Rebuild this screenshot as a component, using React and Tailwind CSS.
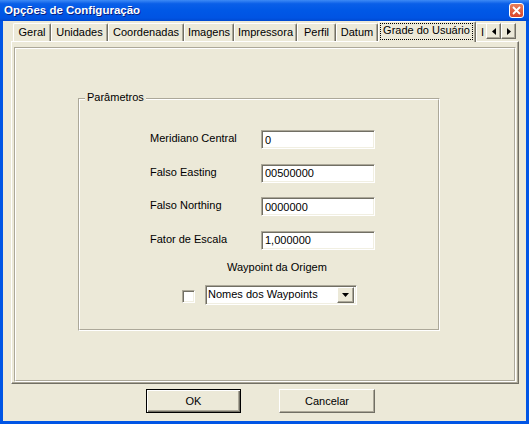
import React from "react";

const tabs = [
  ["Geral", "w-[38px]"],
  ["Unidades", "w-[57px]"],
  ["Coordenadas", "w-[76px]"],
  ["Imagens", "w-[50px]"],
  ["Impressora", "w-[63px]"],
  ["Perfil", "w-[39px]"],
  ["Datum", "w-[42px]"],
];

const fields = [
  ["Meridiano Central", "0"],
  ["Falso Easting", "00500000"],
  ["Falso Northing", "0000000"],
  ["Fator de Escala", "1,000000"],
];

const raised =
  "border border-t-white border-l-white border-r-[#716f64] border-b-[#716f64] shadow-[inset_-1px_-1px_0_#aca899]";
const sunken =
  "border border-t-[#aca899] border-l-[#aca899] border-r-white border-b-white shadow-[inset_1px_1px_0_#716f64,inset_-1px_-1px_0_#f1efe2]";

function Arrow({ dir }) {
  return (
    <svg width="4" height="7" viewBox="0 0 4 7">
      {dir === "left" ? (
        <path d="M4 0 L0 3.5 L4 7 Z" fill="#000" />
      ) : (
        <path d="M0 0 L4 3.5 L0 7 Z" fill="#000" />
      )}
    </svg>
  );
}

export default function App() {
  return (
    <div className="w-[529px] h-[424px] flex flex-col bg-[#0055e5] font-['Liberation_Sans',Arial,sans-serif] text-[11px] text-black">
      {/* Title bar */}
      <div className="h-[21px] flex items-center justify-between pl-[4px] pr-[5px] bg-[linear-gradient(to_bottom,#3d8af5_0%,#0a5fe8_18%,#0058e6_50%,#0054e3_85%,#0049d0_100%)]">
        <span className="text-white font-bold text-[11.5px] leading-none [text-shadow:1px_1px_0_#0a1e80]">
          Opções de Configuração
        </span>
        <div className="w-[15px] h-[15px] rounded-[3px] border border-white bg-[linear-gradient(to_bottom,#e8805c,#d9442a)] flex items-center justify-center">
          <svg width="9" height="9" viewBox="0 0 9 9">
            <path d="M1 1 L8 8 M8 1 L1 8" stroke="#fff" strokeWidth="1.8" />
          </svg>
        </div>
      </div>

      {/* Body */}
      <div className="flex-1 mx-[3px] mb-[3px] bg-[#ece9d8] flex flex-col">
        {/* Tabs */}
        <div className="flex h-[20px] items-end pl-[10px]">
          {tabs.map(([label, w]) => (
            <div
              key={label}
              className={`${w} h-[18px] flex items-center justify-center rounded-t-[2px] border-t border-l border-r border-t-white border-l-white border-r-[#716f64] shadow-[inset_-1px_0_0_#aca899]`}
            >
              {label}
            </div>
          ))}
          <div className="w-[98px] h-[21px] -mb-px relative z-10 bg-[#ece9d8] rounded-t-[2px] border-t border-l border-r border-t-white border-l-white border-r-[#716f64] shadow-[inset_-1px_0_0_#aca899] pt-px pl-px pr-[2px]">
            <div className="h-[17px] border border-dotted border-black flex items-center justify-center pb-[2px]">
              Grade do Usuário
            </div>
          </div>
          <div className="w-[10px] h-[18px] border-t border-l border-t-white border-l-white pl-[4px] flex items-center">
            I
          </div>
          <div className={`w-[15px] h-[16px] mb-[2px] flex items-center justify-center ${raised}`}>
            <Arrow dir="left" />
          </div>
          <div className={`w-[15px] h-[16px] mb-[2px] flex items-center justify-center ${raised}`}>
            <Arrow dir="right" />
          </div>
        </div>

        {/* Tab page */}
        <div className="ml-[8px] mr-[7px] h-[343px] flex border border-t-white border-l-white border-r-[#716f64] border-b-[#716f64] shadow-[inset_-1px_-1px_0_#aca899] pl-[2px] pt-[5px] pr-[2px] pb-[1px]">
          <div className="flex-1 flex border border-t-[#aca899] border-l-[#aca899] border-r-white border-b-white">
            <div className="flex-1 border border-t-white border-l-white border-r-[#aca899] border-b-[#aca899] pl-[62px] pt-[49px]">
              {/* Group box */}
              <div className="relative w-[362px] h-[233px] flex border border-t-[#aca899] border-l-[#aca899] border-r-white border-b-white">
                <span className="absolute left-[6px] -top-[8px] px-[2px] bg-[#ece9d8] leading-[13px]">
                  Parâmetros
                </span>
                <div className="flex-1 border border-t-white border-l-white border-r-[#aca899] border-b-[#aca899] pl-[70px] pt-[30px] flex flex-col">
                  <div className="flex flex-col gap-[14px]">
                    {fields.map(([label, value]) => (
                      <div key={label} className="flex items-center">
                        <span className="w-[111px] pb-[3px]">{label}</span>
                        <input
                          readOnly
                          defaultValue={value}
                          className={`w-[114px] h-[19px] bg-white px-[3px] text-[11px] outline-none ${sunken}`}
                        />
                      </div>
                    ))}
                  </div>
                  <div className="mt-[11px] ml-[77px] leading-[13px]">Waypoint da Origem</div>
                  <div className="mt-[11px] ml-[32px] flex items-center gap-[10px]">
                    <div className={`w-[13px] h-[13px] mt-[2px] bg-white ${sunken}`} />
                    <div className={`w-[152px] h-[20px] bg-white flex items-center justify-between pl-[2px] pr-[2px] ${sunken}`}>
                      <span className="pb-[1px]">Nomes dos Waypoints</span>
                      <div className={`w-[17px] h-[16px] bg-[#ece9d8] flex items-center justify-center ${raised}`}>
                        <svg width="7" height="4" viewBox="0 0 7 4">
                          <path d="M0 0 L7 0 L3.5 4 Z" fill="#000" />
                        </svg>
                      </div>
                    </div>
                  </div>
                </div>
              </div>
            </div>
          </div>
        </div>

        {/* Buttons */}
        <div className="mt-[5px] pl-[143px] flex gap-[38px]">
          <button className="w-[95px] h-[24px] border border-black bg-[#ece9d8] shadow-[inset_1px_1px_0_#fff,inset_-1px_-1px_0_#716f64,inset_-2px_-2px_0_#aca899] text-[11px]">
            OK
          </button>
          <button className={`w-[96px] h-[24px] bg-[#ece9d8] text-[11px] ${raised}`}>
            Cancelar
          </button>
        </div>
      </div>
    </div>
  );
}
